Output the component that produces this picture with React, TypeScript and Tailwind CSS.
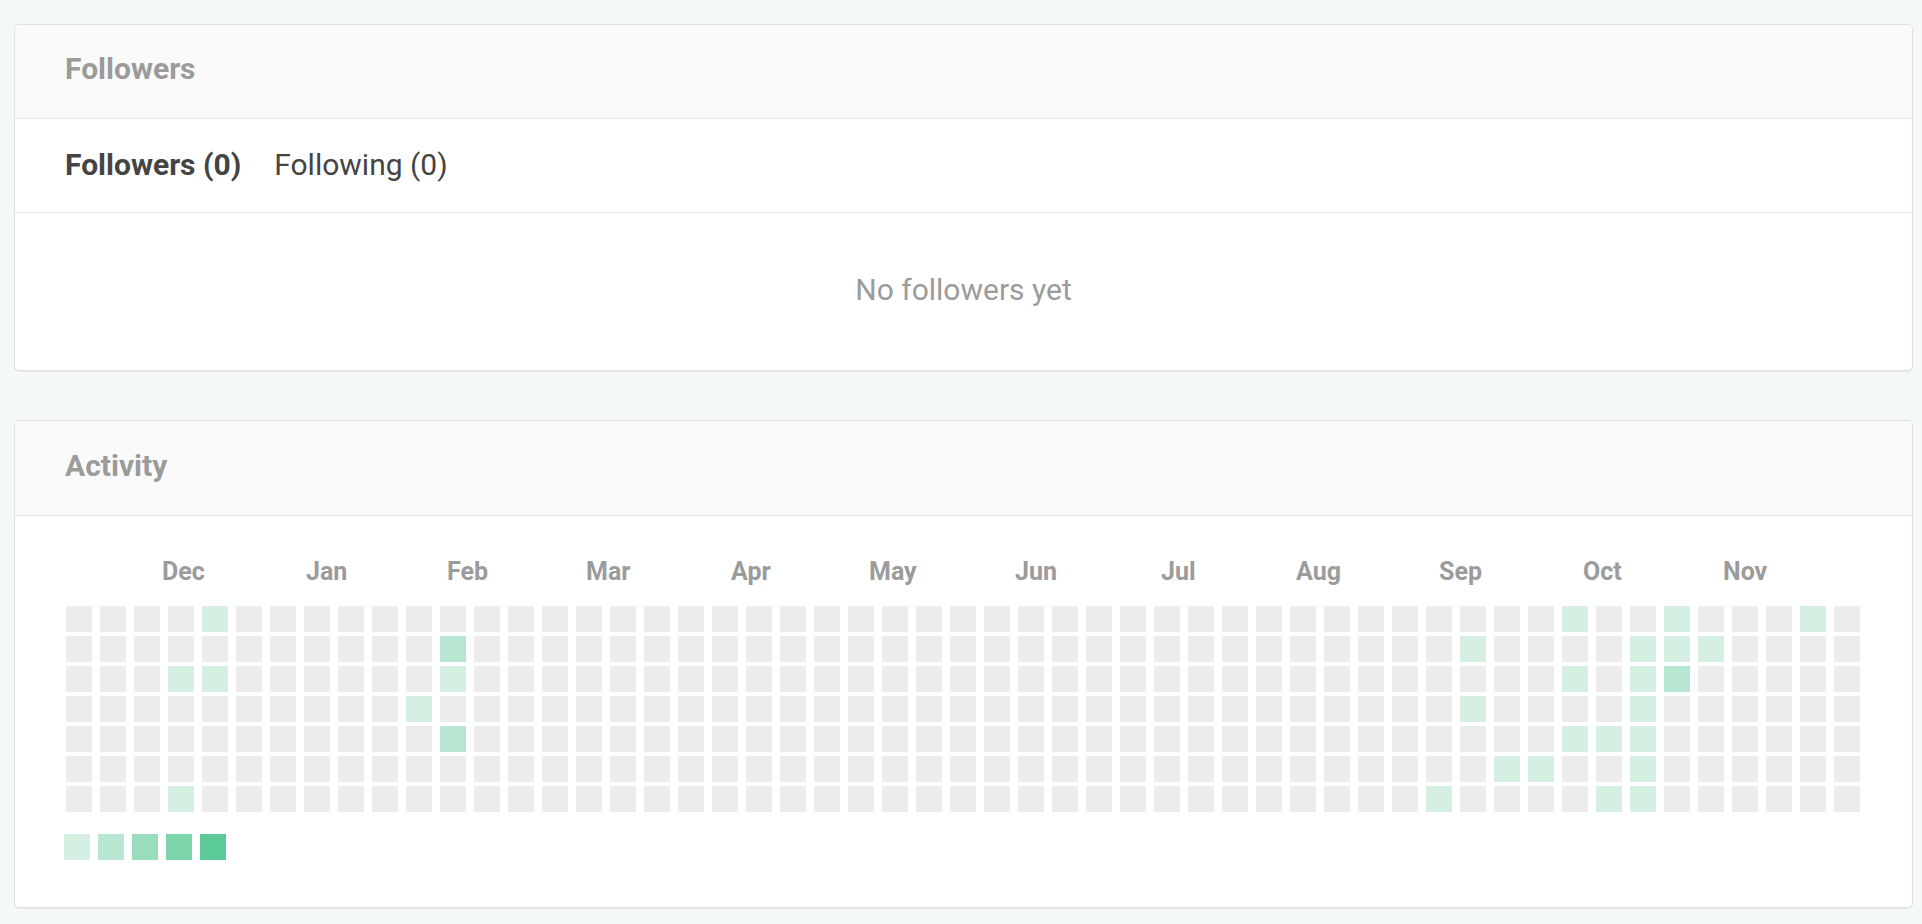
import React from 'react';

const COLS = 53;
const ROWS = 7;

const levelColors = ['#ececec', '#d5f0e2', '#b7e7d2', '#99ddbd', '#7bd4aa', '#5cca97'];

// row -> { col: level }
const activity: Record<number, Record<number, number>> = {
    0: { 4: 1, 44: 1, 47: 1, 51: 1 },
    1: { 11: 2, 41: 1, 46: 1, 47: 1, 48: 1 },
    2: { 3: 1, 4: 1, 11: 1, 44: 1, 46: 1, 47: 2 },
    3: { 10: 1, 41: 1, 46: 1 },
    4: { 11: 2, 44: 1, 45: 1, 46: 1 },
    5: { 42: 1, 43: 1, 46: 1 },
    6: { 3: 1, 40: 1, 45: 1, 46: 1 },
};

const months = [
    { label: 'Dec', x: 96 },
    { label: 'Jan', x: 240 },
    { label: 'Feb', x: 381 },
    { label: 'Mar', x: 520 },
    { label: 'Apr', x: 665 },
    { label: 'May', x: 803 },
    { label: 'Jun', x: 949 },
    { label: 'Jul', x: 1095 },
    { label: 'Aug', x: 1230 },
    { label: 'Sep', x: 1373 },
    { label: 'Oct', x: 1517 },
    { label: 'Nov', x: 1657 },
];

function Heatmap() {
    const cells = [];
    for (let c = 0; c < COLS; c++) {
        for (let r = 0; r < ROWS; r++) {
            const level = activity[r]?.[c] ?? 0;
            cells.push(
                <rect
                    key={`${r}-${c}`}
                    x={c * 34}
                    y={50 + r * 30}
                    width={26}
                    height={26}
                    fill={levelColors[level]}
                />,
            );
        }
    }

    return (
        <svg width={COLS * 34 - 8} height={256} className="block">
            {months.map((m) => (
                <text
                    key={m.label}
                    x={m.x}
                    y={24}
                    className="fill-[#9b9b9b] text-[25px] font-bold"
                >
                    {m.label}
                </text>
            ))}
            {cells}
        </svg>
    );
}

export default function App() {
    return (
        <div className="min-h-screen bg-[#f5f8f9] pt-[24px] pr-[9px] pb-[15px] pl-[14px] font-[Roboto,sans-serif]">
            <div className="overflow-hidden rounded-[5px] border border-[#dfe1e2] bg-white shadow-[0_1px_0_#e6e8e9]">
                <div className="border-b border-[#e6e6e6] bg-[#fafafa] pt-[26px] pb-[32px] pl-[50px] text-[30px] leading-[35px] font-bold text-[#9b9b9b]">
                    Followers
                </div>
                <div className="flex gap-[33px] border-b border-[#e2e2e2] pt-[28px] pb-[30px] pl-[50px] text-[30px] leading-[35px] text-[#444]">
                    <button className="font-bold">Followers (0)</button>
                    <button>Following (0)</button>
                </div>
                <div className="pt-[59px] pb-[63px] text-center text-[30px] leading-[35px] text-[#9b9b9b]">
                    No followers yet
                </div>
            </div>

            <div className="mt-[49px] overflow-hidden rounded-[5px] border border-[#dfe1e2] bg-white shadow-[0_1px_0_#e6e8e9]">
                <div className="border-b border-[#e6e6e6] bg-[#fafafa] pt-[27px] pb-[32px] pl-[50px] text-[30px] leading-[35px] font-bold text-[#9b9b9b]">
                    Activity
                </div>
                <div className="pt-[40px] pb-[47px] pl-[51px]">
                    <Heatmap />
                    <div className="mt-[22px] -ml-[2px] flex gap-2">
                        {levelColors.slice(1).map((color) => (
                            <div
                                key={color}
                                className="h-[26px] w-[26px]"
                                style={{ backgroundColor: color }}
                            />
                        ))}
                    </div>
                </div>
            </div>
        </div>
    );
}
